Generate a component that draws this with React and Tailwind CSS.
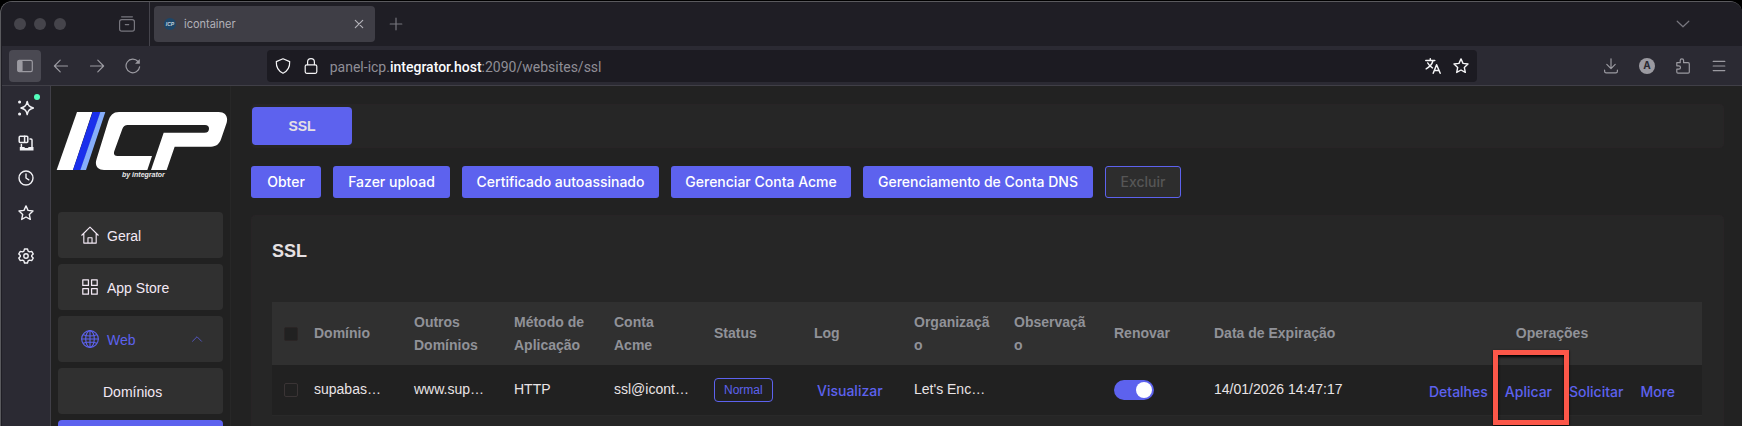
import { useState } from 'react';

const MENU = [
  { label: 'Geral', icon: 'home' },
  { label: 'App Store', icon: 'grid' },
  { label: 'Web', icon: 'globe', open: true },
];

const ACTIONS = [
  { label: 'Obter', width: 'w-[70px]' },
  { label: 'Fazer upload', width: 'w-[117px]' },
  { label: 'Certificado autoassinado', width: 'w-[197px]' },
  { label: 'Gerenciar Conta Acme', width: 'w-[180px]' },
  { label: 'Gerenciamento de Conta DNS', width: 'w-[230px]' },
];

const COLUMNS = [
  'Domínio',
  'Outros Domínios',
  'Método de Aplicação',
  'Conta Acme',
  'Status',
  'Log',
  'Organização',
  'Observação',
  'Renovar',
];

const STAR = 'M8 .9l2 4.5 5 .6-3.7 3.4 1 5L8 12l-4.3 2.4 1-5L1 6l5-.6z';

const Icon = ({ children, className = 'size-4', width = 1.2 }) => (
  <svg
    viewBox="0 0 16 16"
    className={className}
    fill="none"
    stroke="currentColor"
    strokeWidth={width}
    strokeLinecap="round"
    strokeLinejoin="round"
    aria-hidden="true"
  >
    {children}
  </svg>
);

const menuIcons = {
  home: (
    <Icon className="size-[18px]" width={1}>
      <path d="M.7 8.2 8 1l7.3 7.2M2.5 6.8v8.4h11V6.8M6.2 15v-4.6h3.6V15" />
    </Icon>
  ),
  grid: (
    <Icon className="size-[18px]" width={1.1}>
      <path d="M1.6 1.6h5v5h-5zM9.4 1.6h5v5h-5zM1.6 9.4h5v5h-5zM9.4 9.4h5v5h-5z" />
    </Icon>
  ),
  globe: (
    <Icon className="size-[18px]" width={1}>
      <circle cx="8" cy="8" r="7.4" />
      <ellipse cx="8" cy="8" rx="3.8" ry="7.4" />
      <path d="M8 .6v14.8M.6 8h14.8M2 4.2c3.6 1.3 8.4 1.3 12 0M2 11.8c3.6-1.3 8.4-1.3 12 0" />
    </Icon>
  ),
};

const TabBar = () => (
  <div className="flex h-11 shrink-0 items-center bg-[#1f1e25] text-[#77767e]">
    <div className="flex w-[148px] shrink-0 items-center gap-2 self-stretch border-r border-[#45444c] pl-3">
      <span className="size-3 rounded-full bg-[#45444b]" />
      <span className="size-3 rounded-full bg-[#45444b]" />
      <span className="size-3 rounded-full bg-[#45444b]" />
      <button type="button" aria-label="Recent tabs" className="ml-[45px]">
        <Icon>
          <path d="M2.6.8h10.8M6.3 8.6h3.4" />
          <rect x=".6" y="3.6" width="14.8" height="11.6" rx="2.2" />
        </Icon>
      </button>
    </div>
    <div className="ml-1 flex h-9 w-[221px] items-center rounded bg-[#3f3e46] px-2">
      <svg viewBox="0 0 16 16" className="size-4" aria-hidden="true">
        <circle cx="8" cy="8" r="6" fill="#1d4668" />
        <text
          x="8"
          y="10"
          textAnchor="middle"
          fontSize="5"
          fontWeight="700"
          fontStyle="italic"
          fill="#c9d3dc"
          fontFamily="Liberation Sans, sans-serif"
        >
          ICP
        </text>
      </svg>
      <span className="ml-1.5 flex-1 text-[11px] text-[#b2b1b8]">icontainer</span>
      <button type="button" aria-label="Close tab" className="text-[#b2b1b8]">
        <Icon>
          <path d="M4.3 4.3l7.4 7.4M11.7 4.3l-7.4 7.4" />
        </Icon>
      </button>
    </div>
    <button type="button" aria-label="New tab" className="ml-[13px]">
      <Icon>
        <path d="M8 2.2v11.6M2.2 8h11.6" />
      </Icon>
    </button>
    <button type="button" aria-label="List all tabs" className="mr-[51px] ml-auto">
      <Icon>
        <path d="M2.2 5.2 8 10.8l5.8-5.6" />
      </Icon>
    </button>
  </div>
);

const AddressBar = () => (
  <div className="flex h-10 shrink-0 items-center border-b border-[#403f47] bg-[#2b2a33] pr-[15px] pl-[7px] text-[#9b9aa1]">
    <button type="button" aria-label="Sidebar" className="flex size-8 items-center justify-center rounded bg-[#4a4952]">
      <Icon>
        <rect x=".7" y="2.3" width="14.6" height="11.4" rx="1.6" />
        <path d="M1 3.5h4v9H1z" fill="currentColor" />
      </Icon>
    </button>
    <div className="ml-3 flex gap-5">
      <button type="button" aria-label="Back">
        <Icon>
          <path d="M14.5 8h-13M7.2 2.2 1.4 8l5.8 5.8" />
        </Icon>
      </button>
      <button type="button" aria-label="Forward">
        <Icon>
          <path d="M1.5 8h13M8.8 2.2 14.6 8l-5.8 5.8" />
        </Icon>
      </button>
      <button type="button" aria-label="Reload">
        <Icon>
          <path d="M14.6 8.8A6.8 6.8 0 1 1 13 3.5" />
          <path d="M14.8 1v4.8H10z" fill="currentColor" stroke="none" />
        </Icon>
      </button>
    </div>
    <div className="grow-2 basis-0" />
    <div className="flex h-8 grow-19 basis-0 items-center rounded bg-[#1c1b22] px-2 text-[#f5f5f7]">
      <Icon>
        <path d="M8 .8 14.7 3.6c.2 5.2-1.6 9.4-6.7 11.7C2.9 13 1.1 8.8 1.3 3.6z" />
      </Icon>
      <Icon className="ml-3 size-4">
        <rect x="2.2" y="6.8" width="11.6" height="8.5" rx="1.5" />
        <path d="M4.6 6.6V4a3.4 3.4 0 0 1 6.8 0v2.6" />
      </Icon>
      <div className="ml-[11px] flex-1 pt-0.5 font-[Roboto,sans-serif] text-sm text-[#8f8e96]">
        panel-icp.<span className="font-medium text-[#fbfbfe]">integrator.host</span>:2090/websites/ssl
      </div>
      <button type="button" aria-label="Translate">
        <Icon width={1.5}>
          <path d="M.8 2.6h9M5.3.8v1.6M8 2.8C7 6.4 4.6 9 1.2 10.8M2.8 5c1 2 2.6 3.7 4.6 4.9M8.2 15.2l3.4-8.4 3.6 8.4M9.5 12.4h4.4" />
        </Icon>
      </button>
      <button type="button" aria-label="Bookmark" className="ml-3">
        <Icon width={1.4}>
          <path d={STAR} />
        </Icon>
      </button>
    </div>
    <div className="grow-2 basis-0" />
    <div className="flex gap-5">
      <button type="button" aria-label="Downloads">
        <Icon>
          <path d="M8 .8v9.6M3.8 6.4 8 10.6l4.2-4.2M1.6 12v1.2c0 .9.6 1.6 1.6 1.6h9.6c1 0 1.6-.7 1.6-1.6V12" />
        </Icon>
      </button>
      <button
        type="button"
        aria-label="Account"
        className="flex size-4 items-center justify-center rounded-full bg-[#9b9aa1] text-[10px] font-bold text-[#2b2a33]"
      >
        A
      </button>
      <button type="button" aria-label="Extensions">
        <Icon>
          <path d="M1.8 4.7h3.4V2.5a1.7 1.7 0 0 1 3.4 0v2.2h4.5c.7 0 1.2.5 1.2 1.2v8c0 .7-.5 1.2-1.2 1.2H3c-.7 0-1.2-.5-1.2-1.2v-2.7h2a1.7 1.7 0 0 0 0-3.4h-2z" />
        </Icon>
      </button>
      <button type="button" aria-label="Menu">
        <Icon>
          <path d="M2.2 3.4h11.6M2.2 8h11.6M2.2 12.6h11.6" />
        </Icon>
      </button>
    </div>
  </div>
);

const Rail = () => (
  <nav aria-label="Browser tools" className="flex w-12 shrink-0 flex-col items-center bg-[#2b2a33] pt-[14px] text-[#f0f0f4]">
    <button type="button" aria-label="Assistant" className="relative">
      <Icon width={1.5}>
        <path d="M9.2 1.4c.8 4 2 5.5 6.2 6.6-4.2 1.1-5.4 2.6-6.2 6.6C8.4 10.6 7.2 9.1 3 8c4.2-1.1 5.4-2.6 6.2-6.6z" />
        <circle cx="1.6" cy="2" r=".8" fill="currentColor" />
        <circle cx="1.6" cy="14" r=".8" fill="currentColor" />
      </Icon>
      <span className="absolute -top-1.5 -right-1.5 size-1.5 rounded-full bg-[#54ffbd]" />
    </button>
    <button type="button" aria-label="Synced tabs" className="mt-[19px]">
      <Icon width={1.5}>
        <rect x="1.2" y="1.2" width="8.6" height="6.2" rx="1" />
        <path d="M6.6 1.2v6M3.4 9.5v2.4M12 4h1c.7 0 1 .4 1 1v7" />
        <path d="M1.8 12h4.4l1 1h2.6l1-1h4.7v3.4H1.8z" fill="currentColor" stroke="none" />
      </Icon>
    </button>
    <button type="button" aria-label="History" className="mt-[19px]">
      <Icon width={1.4}>
        <circle cx="8" cy="8" r="7" />
        <path d="M8 4v4l2.8 1.8" />
      </Icon>
    </button>
    <button type="button" aria-label="Bookmarks" className="mt-[19px]">
      <Icon width={1.4}>
        <path d={STAR} />
      </Icon>
    </button>
    <button type="button" aria-label="Settings" className="mt-[27px]">
      <Icon width={1.4}>
        <path d="M6.5 1h3l.6 2.1 1.4.8 2.2-.5 1.5 2.5-1.5 1.5v1.2l1.5 1.5-1.5 2.5-2.2-.5-1.4.8L9.5 15h-3l-.6-2.1-1.4-.8-2.2.5L.8 10.1l1.5-1.5V7.4L.8 5.9l1.5-2.5 2.2.5 1.4-.8z" />
        <circle cx="8" cy="8" r="2.2" />
      </Icon>
    </button>
  </nav>
);

const Logo = () => (
  <div className="flex flex-col">
    <svg viewBox="168 96 516 174" className="h-[58px] w-[172px]" role="img" aria-label="ICP">
      <path d="M231 96h46l-58 174h-49z" fill="#fff" />
      <path d="M278 96h24l-60 174h-23z" fill="#1a2fec" />
      <path d="M301 96h15l-58 174h-17z" fill="#86aefb" />
      <path
        fill="#fff"
        d="M357 96H656c20 0 29 14 24 32l-17 50c-5 14-14 22-30 22H524l-24 70h-47l38-112h122c10 0 14-5 14-12s-4-11-12-11H383c-8 0-13 4-16 12l-24 66c-3 9 0 15 9 15h104l-14 42H312c-20 0-29-14-22-34l34-110c6-20 15-30 33-30z"
      />
    </svg>
    <span className="pl-[66px] text-[7px] leading-[9px] font-bold text-[#e8e8e8] italic">by integrator</span>
  </div>
);

const SideMenu = () => (
  <aside className="flex w-[180px] shrink-0 flex-col border-r border-[#272727] bg-[#212121] pt-[26px] font-['Liberation_Sans',Arial,sans-serif]">
    <div className="pl-[5px]">
      <Logo />
    </div>
    <nav className="mt-[33px] flex flex-col gap-1.5 px-[7px] text-sm text-[#f3e9f5]">
      {MENU.map((item) => (
        <a
          key={item.label}
          href="#menu"
          className={`flex h-[46px] shrink-0 items-center rounded bg-[#303030] pr-5 pl-[23px] ${item.open ? 'text-[#5d62ee]' : ''}`}
        >
          {menuIcons[item.icon]}
          <span className="ml-2 flex-1 pt-0.5">{item.label}</span>
          {item.open && (
            <Icon className="size-3" width={1}>
              <path d="M2 11l6-6 6 6" />
            </Icon>
          )}
        </a>
      ))}
      <a href="#dominios" className="flex h-[46px] shrink-0 items-center rounded bg-[#303030] pt-0.5 pl-[45px]">
        Domínios
      </a>
      <a href="#ssl" aria-label="SSL" className="h-[46px] shrink-0 rounded bg-[#5d62ee]" />
    </nav>
  </aside>
);

const LinkButton = ({ children }) => (
  <button type="button" className="font-['Inter',sans-serif] text-sm font-medium text-[#5d62ee]">
    {children}
  </button>
);

const SslTable = () => {
  const [renew, setRenew] = useState(true);

  return (
    <table className="w-full table-fixed border-collapse text-left text-sm leading-[23px] text-[#e9e4e6]">
      <colgroup>
        <col className="w-[30px]" />
        {COLUMNS.map((name) => (
          <col key={name} className="w-[100px]" />
        ))}
        <col />
        <col className="w-[300px]" />
      </colgroup>
      <thead className="bg-[#303030] text-[#909298]">
        <tr className="h-[63px]">
          <th className="pl-3">
            <input
              type="checkbox"
              aria-label="Selecionar todos"
              className="block size-3.5 appearance-none rounded-xs border border-[#2a2525] bg-[#212121]"
            />
          </th>
          {COLUMNS.map((name) => (
            <th key={name} className={name.includes(' ') ? 'px-3' : 'px-3 break-all'}>
              {name}
            </th>
          ))}
          <th className="px-3">Data de Expiração</th>
          <th className="px-3 text-center">Operações</th>
        </tr>
      </thead>
      <tbody>
        <tr className="h-[50px] border-b border-[#292929] bg-[#212121]">
          <td className="pl-3">
            <input
              type="checkbox"
              aria-label="Selecionar linha"
              className="block size-3.5 appearance-none rounded-xs border border-[#3a3435]"
            />
          </td>
          <td className="px-3 whitespace-nowrap">supabas…</td>
          <td className="px-3 whitespace-nowrap">www.sup…</td>
          <td className="px-3">HTTP</td>
          <td className="px-3 whitespace-nowrap">ssl@icont…</td>
          <td className="px-3">
            <span className="inline-flex h-6 items-center rounded border border-[#5d62ee] px-[9px] text-xs text-[#5d62ee]">
              Normal
            </span>
          </td>
          <td className="pt-1 pl-[15px]">
            <LinkButton>Visualizar</LinkButton>
          </td>
          <td className="px-3 whitespace-nowrap">Let's Enc…</td>
          <td />
          <td className="px-3">
            <label className="flex h-5 w-10 items-center rounded-full bg-[#5d62ee] px-0.5">
              <input
                type="checkbox"
                role="switch"
                aria-label="Renovar"
                checked={renew}
                onChange={(e) => setRenew(e.target.checked)}
                className="size-4 appearance-none rounded-full bg-white checked:ml-auto"
              />
            </label>
          </td>
          <td className="px-3 whitespace-nowrap">14/01/2026 14:47:17</td>
          <td className="px-3 pt-1">
            <div className="flex items-center justify-center gap-[17px]">
              <LinkButton>Detalhes</LinkButton>
              <span className="relative flex">
                <LinkButton>Aplicar</LinkButton>
                {/* highlight frame */}
                <span className="pointer-events-none absolute -top-8 -left-3 h-[75px] w-[76px] border-5 border-[#fb5749] shadow-[0_1px_2px_#000,inset_0_2px_3px_#000]" />
              </span>
              <LinkButton>Solicitar</LinkButton>
              <LinkButton>More</LinkButton>
            </div>
          </td>
        </tr>
      </tbody>
    </table>
  );
};

const App = () => (
  <div className="h-screen overflow-hidden bg-black pt-px font-['Inter',sans-serif]">
    <div className="flex h-full flex-col overflow-hidden rounded-t-xl border-t border-l border-[#5a5a5e] bg-[#1f1e25] pl-px">
      <TabBar />
      <AddressBar />
      <div className="flex min-h-0 flex-1">
        <Rail />
        <div className="flex min-w-0 flex-1 border-l border-[#403f47] bg-[#222222]">
          <SideMenu />
          <main className="min-w-0 flex-1 pt-[18px] pr-[18px] pl-5 font-['Liberation_Sans',Arial,sans-serif]">
            <div className="flex rounded border border-[#282426] bg-[#262626] py-0.5">
              <button type="button" className="h-[38px] w-[100px] rounded bg-[#5d62ee] text-sm font-bold text-[#e5e0e5]">
                SSL
              </button>
            </div>
            <div className="mt-[18px] flex flex-wrap gap-3 font-['Inter',sans-serif] text-sm font-medium">
              {ACTIONS.map(({ label, width }) => (
                <button key={label} type="button" className={`h-8 rounded-[3px] bg-[#5d62ee] whitespace-nowrap text-white ${width}`}>
                  {label}
                </button>
              ))}
              <button
                type="button"
                disabled
                className="h-8 w-[76px] rounded-[3px] border border-[#5d62ee] bg-[#2d2d2d] text-[#565656]"
              >
                Excluir
              </button>
            </div>
            <section className="mt-[17px] rounded border border-[#282426] bg-[#262626] pt-[23px] pr-[21px] pb-5 pl-5">
              <h1 className="text-lg leading-6 font-bold text-[#e5e0e2]">SSL</h1>
              <div className="mt-[39px]">
                <SslTable />
              </div>
            </section>
          </main>
        </div>
      </div>
    </div>
  </div>
);

export default App;
